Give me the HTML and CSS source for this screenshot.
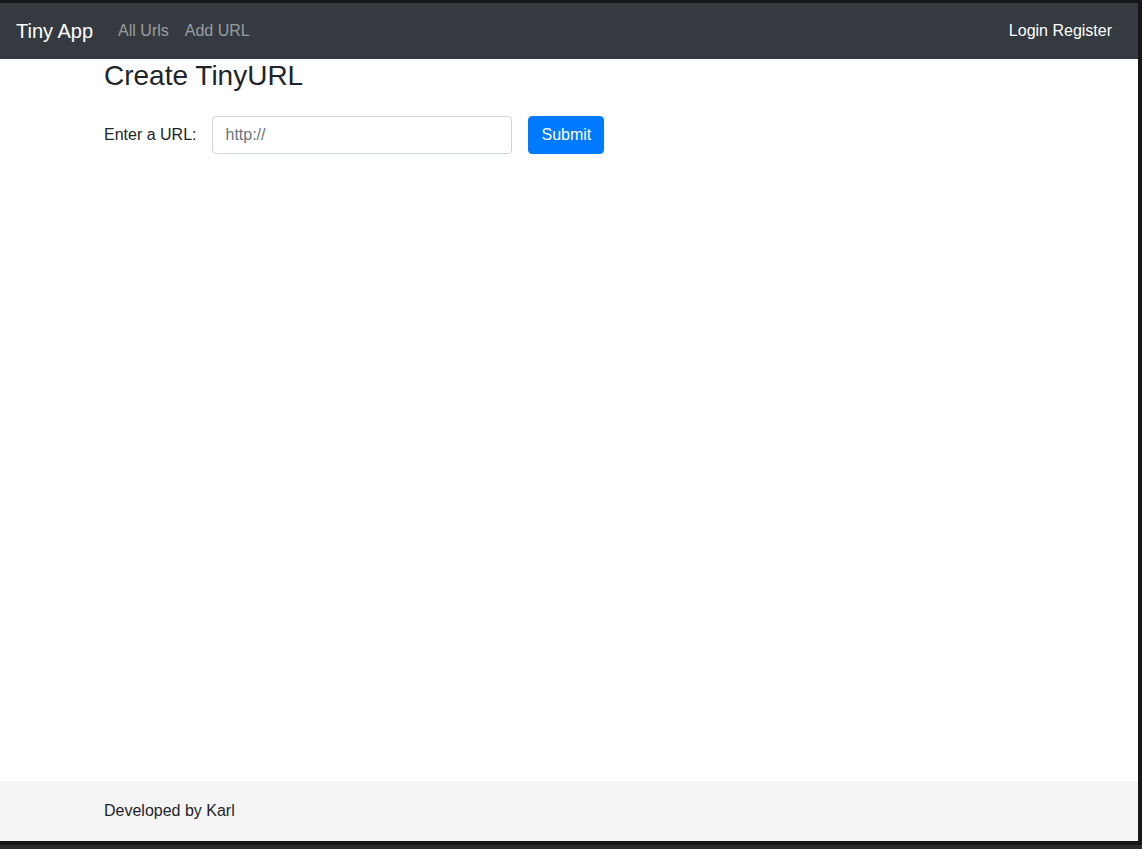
FILE: index.html
```html
<!DOCTYPE html>
<html lang="en">
<head>
<meta charset="utf-8">
<title>Tiny App</title>
<link rel="stylesheet" href="styles.css">
</head>
<body>
<div class="window">
  <nav class="navbar">
    <a class="brand" href="#">Tiny App</a>
    <div class="nav-links">
      <a class="nav-link" href="#">All Urls</a>
      <a class="nav-link" href="#">Add URL</a>
    </div>
    <div class="nav-right">
      <span class="nav-user">Login Register</span>
    </div>
  </nav>
  <main class="main">
    <div class="container">
      <h3 class="title">Create TinyURL</h3>
      <form class="url-form">
        <label class="label" for="longURL">Enter a URL:</label>
        <input class="input" id="longURL" type="text" placeholder="http://">
        <button class="btn" type="button">Submit</button>
      </form>
    </div>
  </main>
  <footer class="footer">
    <div class="container">Developed by Karl</div>
  </footer>
</div>
<div class="desktop"></div>
</body>
</html>
```
FILE: styles.css
```css
* { box-sizing: border-box; }
html, body { margin: 0; padding: 0; }
body {
  background: #161718;
  padding-top: 3px;
  font-family: "Liberation Sans", Arial, sans-serif;
  font-size: 16px;
  line-height: 1.5;
  color: #212529;
  height: 849px;
  overflow: hidden;
}
.window {
  width: 1138px;
  height: 838px;
  display: flex;
  flex-direction: column;
  background: #fff;
}
.navbar {
  height: 56px;
  background: #343a40;
  display: flex;
  align-items: center;
  padding: 8px 16px;
}
.brand {
  color: #fff;
  font-size: 20px;
  line-height: 30px;
  padding: 5px 0;
  margin-right: 17px;
  text-decoration: none;
}
.nav-links { display: flex; }
.nav-link {
  color: rgba(255,255,255,.5);
  text-decoration: none;
  padding: 8px;
}
.nav-right { margin-left: auto; margin-right: 2px; }
.nav-user {
  color: #fff;
  padding: 8px;
  display: inline-block;
}
.main { flex: 1; }
.container {
  width: 960px;
  margin: 0 auto;
  padding: 0 15px;
}
.title {
  margin: 0 0 8px;
  font-size: 28px;
  font-weight: 500;
  line-height: 1.2;
}
.url-form {
  display: flex;
  align-items: center;
  margin-top: 23px;
}
.label { margin-right: 16px; }
.input {
  width: 300px;
  height: 38px;
  padding: 6px 12px;
  font-family: inherit;
  font-size: 16px;
  color: #495057;
  border: 1px solid #ced4da;
  border-radius: 4px;
  margin-right: 16px;
}
.input::placeholder { color: #6c757d; }
.btn {
  height: 38px;
  padding: 6px 12px;
  font-family: inherit;
  font-size: 16px;
  color: #fff;
  background: #007bff;
  border: 1px solid #007bff;
  border-radius: 4px;
}
.footer {
  height: 60px;
  background: #f4f4f4;
  display: flex;
  align-items: center;
}
.desktop {
  height: 4px;
  margin-top: 4px;
  background: #2a2b2b;
}
```
